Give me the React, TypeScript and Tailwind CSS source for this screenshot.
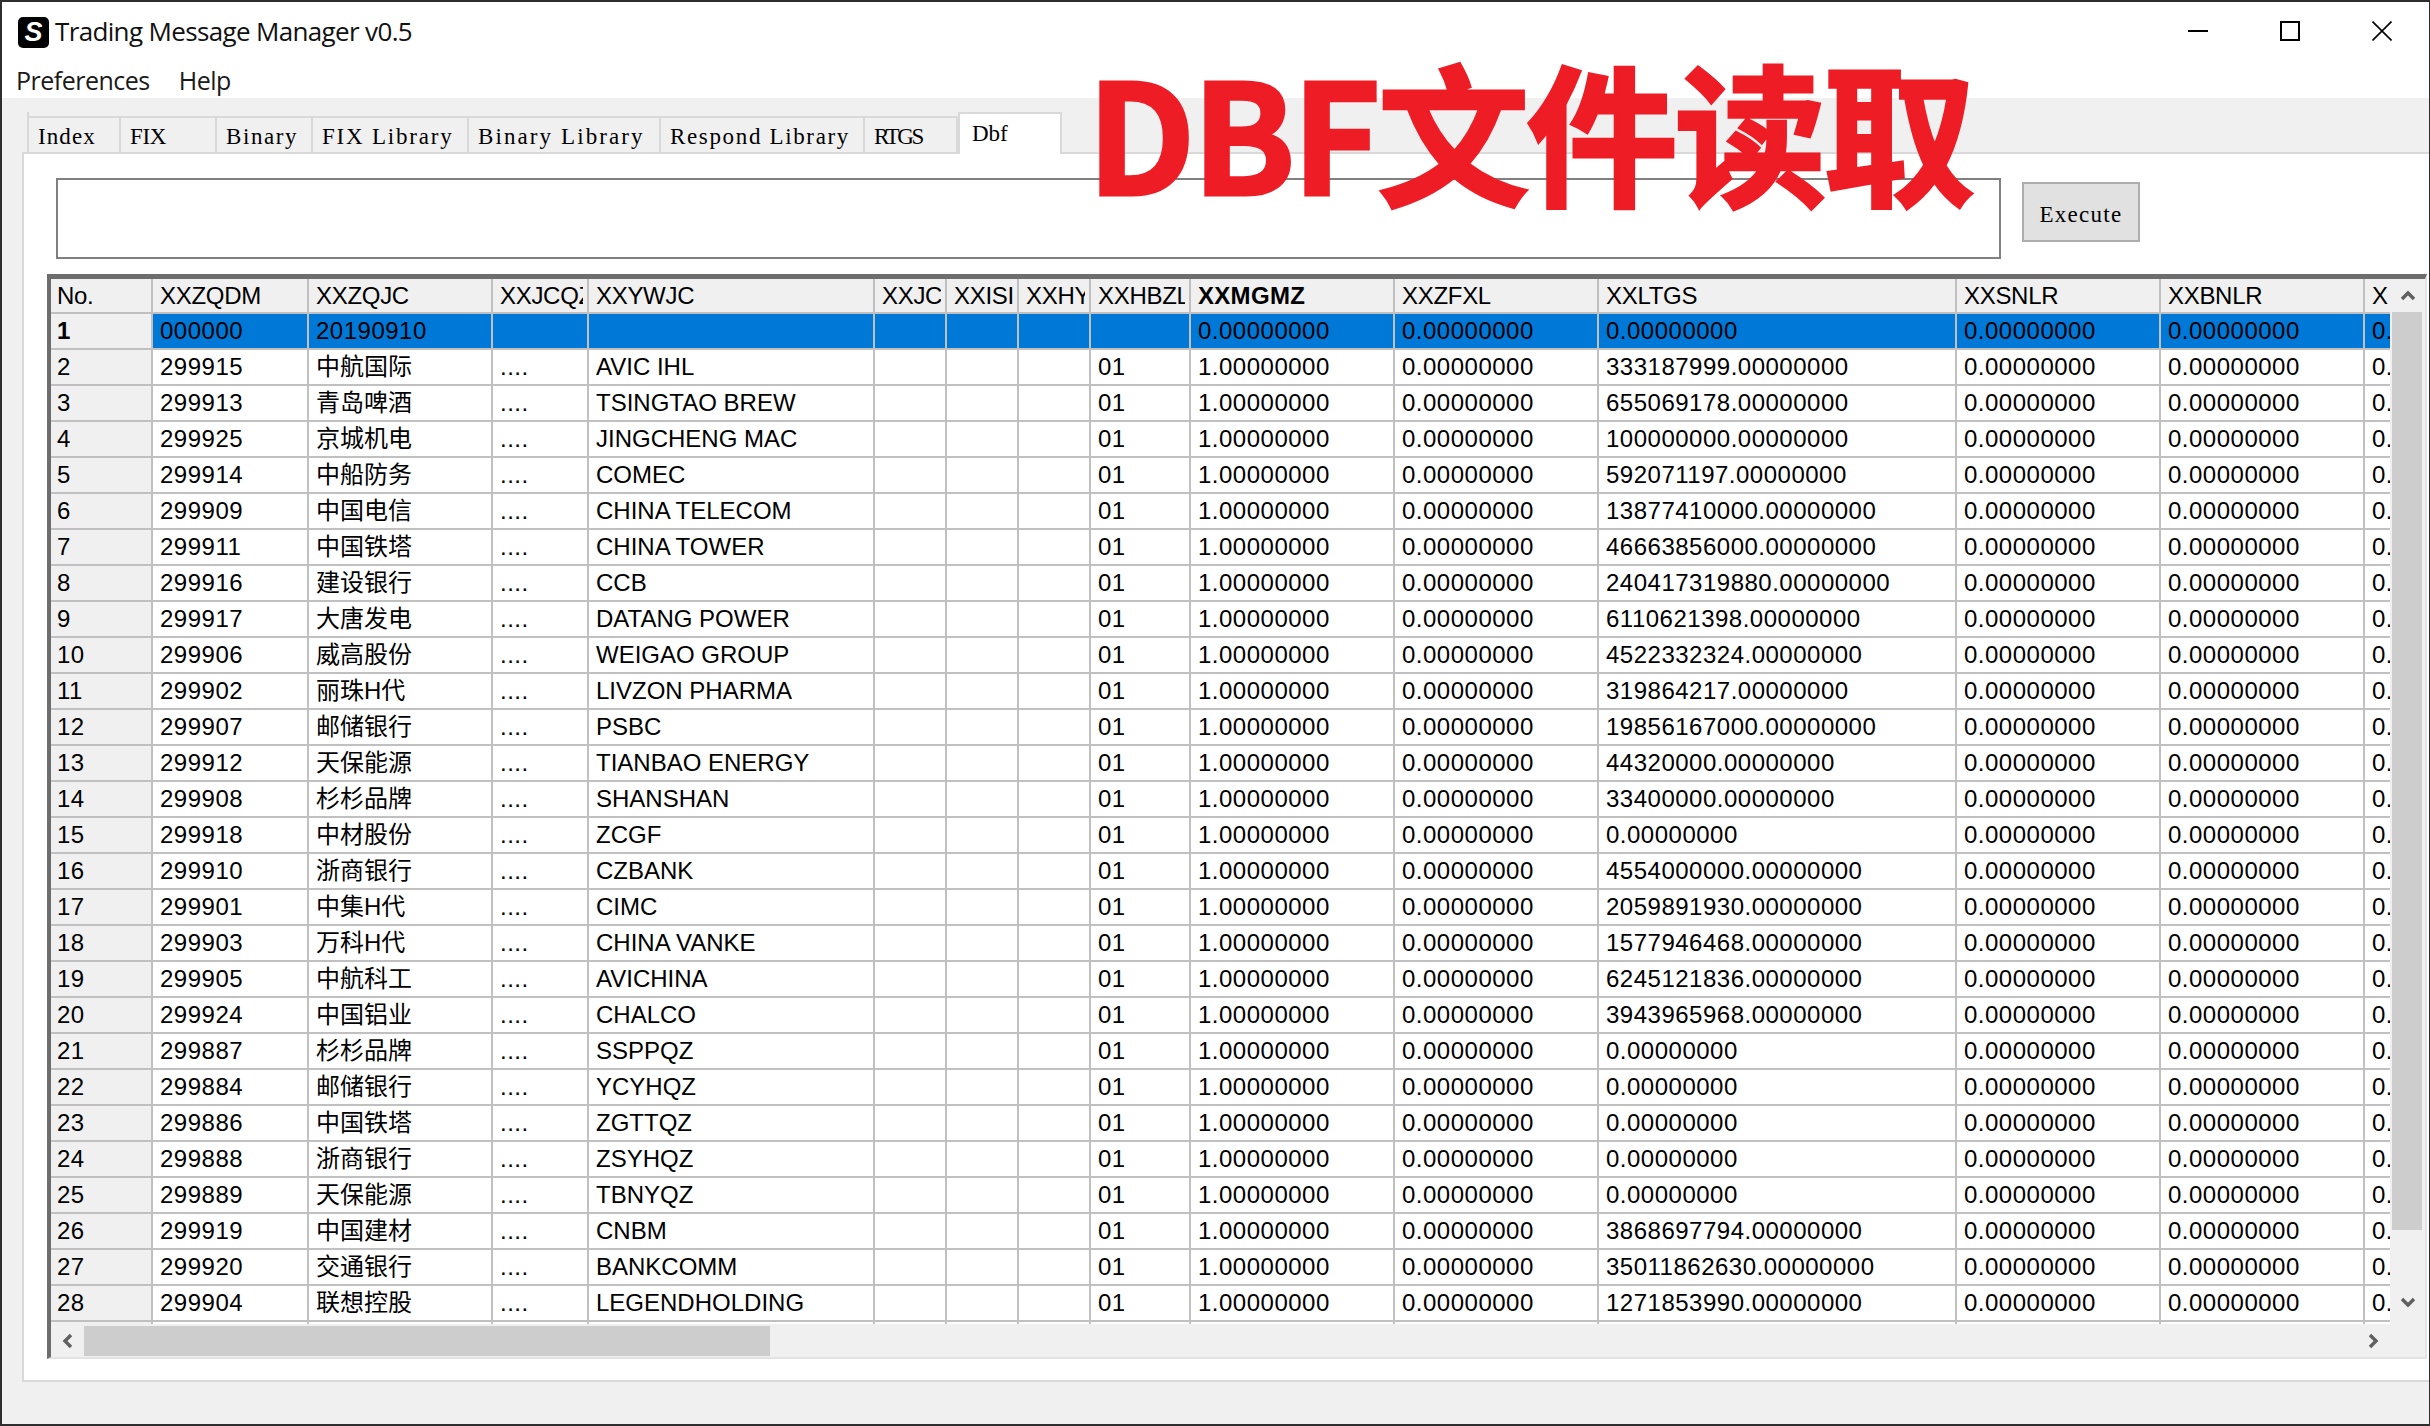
const GRID = "grid grid-cols-[102px_156px_184px_96px_286px_72px_72px_72px_100px_204px_204px_358px_204px_204px_25px]";
const Z = "0.00000000";

const headers = ["No.","XXZQDM","XXZQJC","XXJCQZ","XXYWJC","XXJCD","XXISIN","XXHYZL","XXHBZL","XXMGMZ","XXZFXL","XXLTGS","XXSNLR","XXBNLR","X"];

const data: [string,string,string,string][] = [
  ["299915","中航国际","AVIC IHL","333187999.00000000"],
  ["299913","青岛啤酒","TSINGTAO BREW","655069178.00000000"],
  ["299925","京城机电","JINGCHENG MAC","100000000.00000000"],
  ["299914","中船防务","COMEC","592071197.00000000"],
  ["299909","中国电信","CHINA TELECOM","13877410000.00000000"],
  ["299911","中国铁塔","CHINA TOWER","46663856000.00000000"],
  ["299916","建设银行","CCB","240417319880.00000000"],
  ["299917","大唐发电","DATANG POWER","6110621398.00000000"],
  ["299906","威高股份","WEIGAO GROUP","4522332324.00000000"],
  ["299902","丽珠H代","LIVZON PHARMA","319864217.00000000"],
  ["299907","邮储银行","PSBC","19856167000.00000000"],
  ["299912","天保能源","TIANBAO ENERGY","44320000.00000000"],
  ["299908","杉杉品牌","SHANSHAN","33400000.00000000"],
  ["299918","中材股份","ZCGF",Z],
  ["299910","浙商银行","CZBANK","4554000000.00000000"],
  ["299901","中集H代","CIMC","2059891930.00000000"],
  ["299903","万科H代","CHINA VANKE","1577946468.00000000"],
  ["299905","中航科工","AVICHINA","6245121836.00000000"],
  ["299924","中国铝业","CHALCO","3943965968.00000000"],
  ["299887","杉杉品牌","SSPPQZ",Z],
  ["299884","邮储银行","YCYHQZ",Z],
  ["299886","中国铁塔","ZGTTQZ",Z],
  ["299888","浙商银行","ZSYHQZ",Z],
  ["299889","天保能源","TBNYQZ",Z],
  ["299919","中国建材","CNBM","3868697794.00000000"],
  ["299920","交通银行","BANKCOMM","35011862630.00000000"],
  ["299904","联想控股","LEGENDHOLDING","1271853990.00000000"],
];

function Cell({ text, bold, head, sel, first, last }: { text: string; bold?: boolean; head?: boolean; sel?: boolean; first?: boolean; last?: boolean }) {
  const bg = head || first ? "bg-[#f0f0f0]" : sel ? "bg-[#0078d7]" : "bg-white";
  const numeric = /^[\d.]+$/.test(text);
  return (
    <div className={`flex h-full min-w-0 items-center border-b-2 border-[#c0c0c0] ${last ? "" : "border-r-2"} ${first ? "pl-[6px]" : "pl-[7px]"} ${last ? "pr-0" : "pr-[4px]"} ${bg}`}>
      <div className={`overflow-hidden whitespace-nowrap leading-[30px] ${bold ? "font-bold tracking-[0.3px]" : ""} ${numeric ? "tracking-[0.5px]" : ""} ${head && !bold ? "tracking-[-0.3px]" : ""}`}>{text}</div>
    </div>
  );
}

function Row({ cells, sel, boldNo }: { cells: string[]; sel?: boolean; boldNo?: boolean }) {
  return (
    <div className={`${GRID} h-[36px]`}>
      {cells.map((c, i) => (
        <Cell key={i} text={c} first={i === 0} last={i === cells.length - 1} sel={sel} bold={i === 0 && boldNo} />
      ))}
    </div>
  );
}

function Tab({ label, w, tracking, active }: { label: string; w: string; tracking: string; active?: boolean }) {
  return (
    <div className={active
      ? `relative z-10 -mb-[2px] flex h-[42px] items-start border-x-2 border-t-2 border-[#d9d9d9] bg-white pl-[12px] pt-[6px] ${w}`
      : `flex h-[36px] items-center border-t-2 border-r-2 border-[#d9d9d9] pl-[9px] pt-[3px] ${w}`}>
      <span className={`font-['Liberation_Serif',serif] text-[23px] leading-[28px] whitespace-nowrap text-black ${tracking}`}>{label}</span>
    </div>
  );
}

const Chevron = ({ d }: { d: string }) => (
  <svg width="16" height="16" viewBox="0 0 16 16" fill="none" stroke="#606060" strokeWidth="3.4">
    <path d={d} />
  </svg>
);

export default function App() {
  return (
    <div className="relative flex h-[1426px] w-[2430px] flex-col overflow-hidden border-y-2 border-l-2 border-r border-[#2e2e2e] bg-white font-['Liberation_Sans','Noto_Sans_CJK_SC',sans-serif] text-[24px] leading-none text-black">
      {/* title bar */}
      <div className="flex h-[60px] shrink-0 items-center pl-[16px] pb-[2px]">
        <div className="mt-[2px] flex h-[31px] w-[31px] items-center justify-center rounded-[5px] bg-black">
          <span className="font-['Liberation_Sans',sans-serif] text-[27px] font-bold italic leading-none text-white">S</span>
        </div>
        <span className="ml-[6px] font-['Open_Sans',sans-serif] text-[26px] leading-[36px] tracking-[-0.65px] text-[#111]">Trading Message Manager v0.5</span>
        <div className="ml-auto mr-[1px] flex">
          <div className="flex h-[58px] w-[92px] items-center justify-center">
            <svg width="20" height="20" viewBox="0 0 20 20" stroke="#000" strokeWidth="2"><path d="M0 10h20" /></svg>
          </div>
          <div className="flex h-[58px] w-[92px] items-center justify-center">
            <svg width="20" height="20" viewBox="0 0 20 20" fill="none" stroke="#000" strokeWidth="2"><rect x="1" y="1" width="18" height="18" /></svg>
          </div>
          <div className="flex h-[58px] w-[92px] items-center justify-center">
            <svg width="20" height="20" viewBox="0 0 20 20" stroke="#000" strokeWidth="1.6"><path d="M0.5 0.5l19 19M19.5 0.5l-19 19" /></svg>
          </div>
        </div>
      </div>
      {/* menu */}
      <div className="flex h-[36px] shrink-0 items-start gap-[29px] pl-[14px] pt-[1px] font-['Open_Sans',sans-serif] text-[25px] leading-[34px] tracking-[-0.5px] text-[#1a1a1a]">
        <span>Preferences</span>
        <span>Help</span>
      </div>
      {/* body */}
      <div className="flex min-h-0 flex-1 flex-col bg-[#f0f0f0]">
        <div className="flex h-[54px] shrink-0 items-end pl-[25px]">
          <div className="flex items-end border-l-2 border-[#d9d9d9]">
            <Tab label="Index" w="w-[92px]" tracking="tracking-[1.1px]" />
            <Tab label="FIX" w="w-[96px]" tracking="tracking-[-0.3px]" />
            <Tab label="Binary" w="w-[96px]" tracking="tracking-[1.6px]" />
            <Tab label="FIX Library" w="w-[156px]" tracking="tracking-[1.8px]" />
            <Tab label="Binary Library" w="w-[192px]" tracking="tracking-[2.1px]" />
            <Tab label="Respond Library" w="w-[204px]" tracking="tracking-[1.65px]" />
            <Tab label="RTGS" w="w-[93px]" tracking="tracking-[-2.4px]" />
            <Tab label="Dbf" w="w-[104px]" tracking="tracking-[0px]" active />
          </div>
        </div>
        <div className="ml-[20px] h-[1230px] shrink-0 border-y-2 border-l-2 border-[#d9d9d9] bg-white">
          <div className="flex items-start pl-[32px] pt-[24px]">
            <div className="h-[81px] w-[1945px] border-2 border-[#808080] bg-white" />
            <button className="ml-[21px] mt-[4px] flex h-[60px] w-[118px] items-center justify-center border-2 border-[#adadad] bg-[#e1e1e1] pt-[6px]">
              <span className="font-['Liberation_Serif',serif] text-[23px] leading-[28px] tracking-[1.3px] text-black">Execute</span>
            </button>
          </div>
          {/* table */}
          <div className="ml-[23px] mt-[15px] h-[1085px] w-[2380px] border-l-4 border-t-[5px] border-b-2 border-r-2 border-l-[#6d6d6d] border-t-[#6d6d6d] border-b-[#e3e3e3] border-r-[#e3e3e3]">
            <div className="flex h-[1045px]">
              <div className="h-[1045px] w-[2339px] overflow-hidden bg-white">
                <div className={`${GRID} h-[35px]`}>
                  {headers.map((h, i) => (
                    <Cell key={h} text={h} head first={i === 0} last={i === headers.length - 1} bold={h === "XXMGMZ"} />
                  ))}
                </div>
                <Row sel boldNo cells={["1","000000","20190910","","","","","","",Z,Z,Z,Z,Z,"0."]} />
                {data.map((r, i) => (
                  <Row key={r[0]} cells={[String(i + 2),r[0],r[1],"....",r[2],"","","","01","1.00000000",Z,r[3],Z,Z,"0."]} />
                ))}
                <Row cells={["","","","","","","","","","","","","","",""]} />
              </div>
              <div className="flex w-[35px] flex-col items-center bg-[#f0f0f0]">
                <div className="flex h-[33px] items-center justify-center"><Chevron d="M2 11l6-6 6 6" /></div>
                <div className="ml-[2px] mr-[3px] h-[918px] w-[30px] bg-[#cdcdcd]" />
                <div className="mt-auto flex h-[33px] w-full items-center justify-center pb-[12px]"><Chevron d="M2 5l6 6 6-6" /></div>
              </div>
            </div>
            <div className="flex h-[33px] items-center bg-[#f0f0f0]">
              <div className="flex w-[33px] items-center justify-center"><Chevron d="M11 2L5 8l6 6" /></div>
              <div className="h-[30px] w-[686px] bg-[#cdcdcd]" />
              <div className="ml-auto mr-[44px] flex items-center"><Chevron d="M5 2l6 6-6 6" /></div>
            </div>
          </div>
        </div>
      </div>
      {/* overlay title */}
      <div className="absolute left-[1085px] top-[44px] whitespace-nowrap font-['Noto_Sans_CJK_SC',sans-serif] text-[152px] font-bold leading-[1.1] tracking-[-3.5px] text-[#ee1c25] [-webkit-text-stroke:3px_#ee1c25]">
        DBF文件读取
      </div>
    </div>
  );
}
